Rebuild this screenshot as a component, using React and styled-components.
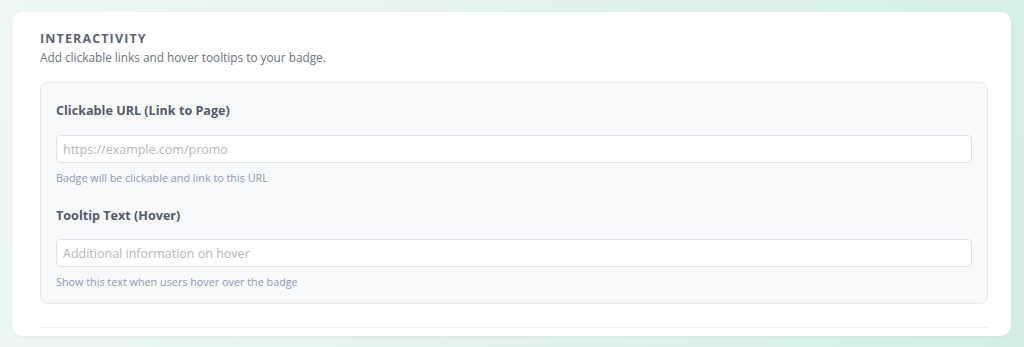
import React from "react";
import styled, { createGlobalStyle } from "styled-components";

const Global = createGlobalStyle`
  html, body { margin: 0; padding: 0; }
  body {
    font-family: "Open Sans", "Noto Sans", sans-serif;
    background: linear-gradient(100deg, #eef7f3 0%, #e2f3ec 50%, #d3efe3 100%);
    min-height: 347px;
  }
`;

const Page = styled.div`
  padding: 12px 13px 12px 12px;
  box-sizing: border-box;
  height: 347px;
`;

const Card = styled.section`
  background: #ffffff;
  border-radius: 10px;
  padding: 18px 23px 8px 28px;
  box-shadow: 0 1px 3px rgba(0, 0, 0, 0.06);
`;

const Title = styled.h2`
  margin: 0;
  font-size: 12.5px;
  line-height: 18px;
  font-weight: 700;
  letter-spacing: 0.09em;
  text-transform: uppercase;
  color: #5d6372;
`;

const Subtitle = styled.p`
  margin: 0;
  font-size: 11.8px;
  line-height: 18px;
  color: #6b7280;
`;

const Panel = styled.div`
  margin-top: 16px;
  background: #f8f9fb;
  border: 1px solid #e6e8ec;
  border-radius: 8px;
  padding: 19px 15px 13px;
  display: flex;
  flex-direction: column;
  gap: 21px;
`;

const Field = styled.div`
  display: flex;
  flex-direction: column;
`;

const Label = styled.label`
  font-size: 12.6px;
  line-height: 18px;
  font-weight: 700;
  color: #545b69;
  margin-bottom: ${(p) => p.$gap}px;
`;

const Input = styled.input`
  box-sizing: border-box;
  height: 28px;
  width: 100%;
  border: 1px solid #dfe2e7;
  border-radius: 4px;
  background: #ffffff;
  padding: 0 6px;
  font-family: inherit;
  font-size: 12.5px;
  color: #374151;
  outline: none;
  &::placeholder { color: #b3b8c0; }
`;

const Help = styled.span`
  margin-top: 7px;
  font-size: 10.8px;
  line-height: 16px;
  color: #8d9ab0;
`;

const Divider = styled.hr`
  margin: 23px 0 0;
  border: none;
  border-top: 1px solid #eceef1;
`;

export default function App() {
  return (
    <>
      <Global />
      <Page>
        <Card>
          <Title>Interactivity</Title>
          <Subtitle>Add clickable links and hover tooltips to your badge.</Subtitle>
          <Panel>
            <Field>
              <Label $gap={15}>Clickable URL (Link to Page)</Label>
              <Input placeholder="https://example.com/promo" />
              <Help>Badge will be clickable and link to this URL</Help>
            </Field>
            <Field>
              <Label $gap={14}>Tooltip Text (Hover)</Label>
              <Input placeholder="Additional information on hover" />
              <Help>Show this text when users hover over the badge</Help>
            </Field>
          </Panel>
          <Divider />
        </Card>
      </Page>
    </>
  );
}
